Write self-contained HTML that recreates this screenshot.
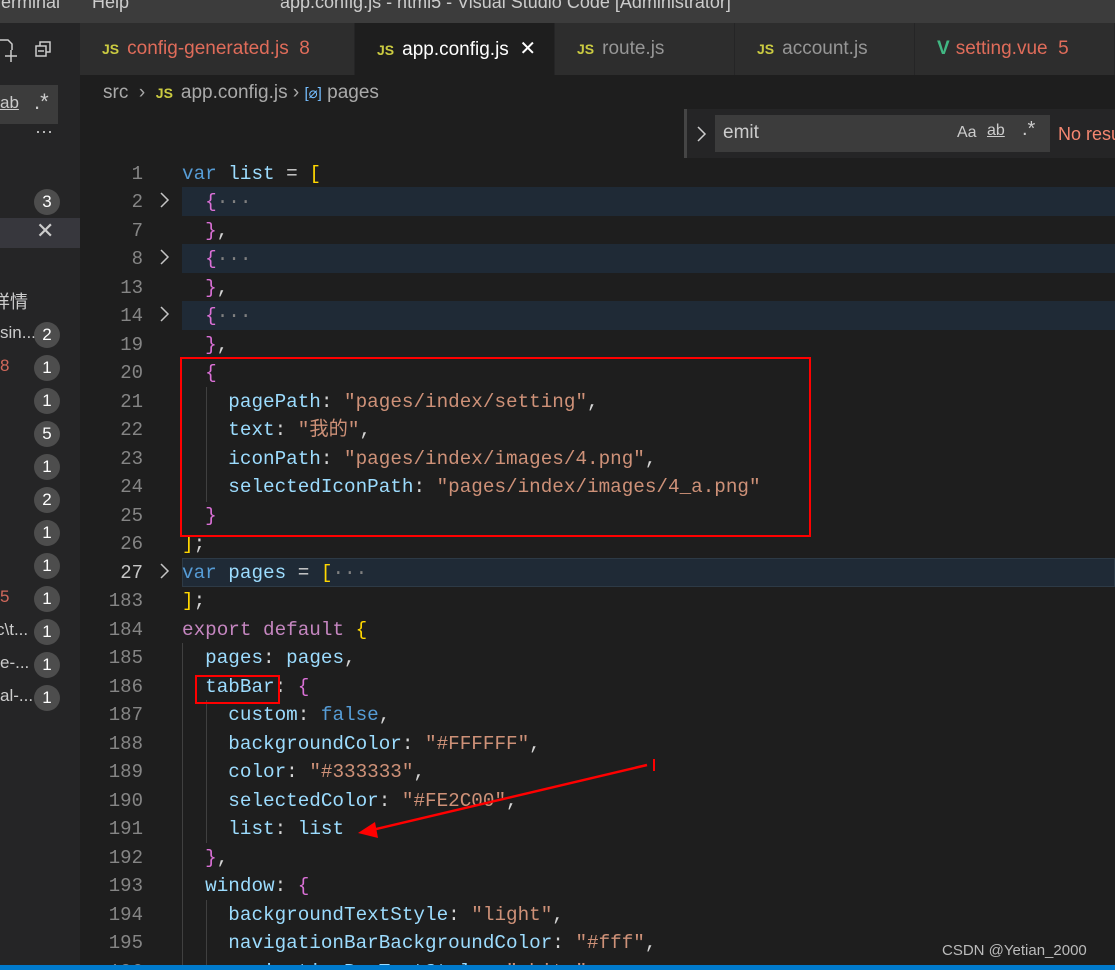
<!DOCTYPE html>
<html><head><meta charset="utf-8"><style>
*{margin:0;padding:0;box-sizing:border-box}
html,body{width:1115px;height:970px;overflow:hidden}
body{background:#1e1e1e;font-family:"Liberation Sans","Noto Sans CJK SC",sans-serif;position:relative;color:#d4d4d4}
.abs{position:absolute}
.title{left:0;top:0;width:1115px;height:23px;background:#3c3c3c;color:#ccc;font-size:18px;overflow:hidden}
.side{left:0;top:23px;width:80px;height:942px;background:#252526}
.tabs{left:80px;top:23px;width:1035px;height:52px;background:#252526}
.tab{position:absolute;top:0;height:52px;background:#2d2d2d;border-right:1px solid #252526;font-size:19px;line-height:52px;color:#969696;white-space:nowrap}
.js{color:#cbcb41;font-weight:bold;font-size:14px;margin-right:8px}
.code{font-family:"Liberation Mono","Noto Sans CJK SC",monospace;font-size:19.3px;white-space:pre;line-height:24px}
.ln{position:absolute;left:80px;width:63px;text-align:right;color:#858585;font-family:"Liberation Mono",monospace;font-size:19px;line-height:24px}
.l{position:absolute;left:182px;height:24px;overflow:visible}
.fold{position:absolute;left:182px;width:933px;height:29px;background:#1f2a36}
.k{color:#569cd6}.p{color:#9cdcfe}.s{color:#ce9178}.c{color:#c586c0}.b{color:#da70d6}.y{color:#ffd700}.g{color:#808080}
.badge{position:absolute;left:34px;width:26px;height:26px;border-radius:13px;background:#4d4d4d;color:#fff;font-size:17px;text-align:center;line-height:26px}
.st{position:absolute;color:#ccc;font-size:17px;white-space:nowrap}
.guide{position:absolute;width:1px;background:#404040}
</style></head><body>
<div class="abs title"><span class="abs" style="left:-8px;top:-8px">Terminal</span><span class="abs" style="left:92px;top:-8px">Help</span><span class="abs" style="left:280px;top:-8px">app.config.js - html5 - Visual Studio Code [Administrator]</span></div>
<div class="abs side">
 <svg class="abs" style="left:0;top:13px" width="80" height="30"><path d="M0 4h8l4 4v6" stroke="#ccc" fill="none" stroke-width="1.5"/><path d="M11 14v12M5 20h12" stroke="#ccc" stroke-width="1.5"/><rect x="36" y="10" width="10" height="10" stroke="#ccc" fill="none" stroke-width="1.5"/><path d="M40 10V6h10v10h-4M38 15h6" stroke="#ccc" fill="none" stroke-width="1.5"/></svg>
 <div class="abs" style="left:0;top:62px;width:58px;height:39px;background:#3c3c3c"></div>
 <div class="abs" style="left:0;top:70px;font-size:17px;color:#ccc;text-decoration:underline">ab</div>
 <div class="abs" style="left:34px;top:66px;font-size:22px;color:#ccc">.*</div>
 <div class="abs" style="left:35px;top:98px;font-size:18px;color:#ccc">&middot;&middot;&middot;</div>
 <div class="badge" style="top:166px">3</div>
 <div class="abs" style="left:0;top:195px;width:80px;height:30px;background:#37373d"></div>
 <div class="abs" style="left:36px;top:195px;color:#ccc;font-size:22px">&#x2715;</div>
 <div class="st" style="left:-8px;top:265px;font-size:18px">详情</div>
 <div class="st" style="left:0;top:300px">sin...</div><div class="badge" style="top:299px">2</div>
 <div class="st" style="left:0;top:333px;color:#d1685b">8</div><div class="badge" style="top:332px">1</div>
 <div class="badge" style="top:365px">1</div>
 <div class="badge" style="top:398px">5</div>
 <div class="badge" style="top:431px">1</div>
 <div class="badge" style="top:464px">2</div>
 <div class="badge" style="top:497px">1</div>
 <div class="badge" style="top:530px">1</div>
 <div class="st" style="left:0;top:564px;color:#d1685b">5</div><div class="badge" style="top:563px">1</div>
 <div class="st" style="left:-4px;top:597px">c\t...</div><div class="badge" style="top:596px">1</div>
 <div class="st" style="left:0;top:630px">e-...</div><div class="badge" style="top:629px">1</div>
 <div class="st" style="left:0;top:663px">al-...</div><div class="badge" style="top:662px">1</div>
</div>
<div class="abs tabs">
 <div class="tab" style="left:0;width:275px;padding-left:22px;color:#e06c5a"><span class="js">JS</span>config-generated.js&nbsp; 8</div>
 <div class="tab" style="left:275px;width:200px;padding-left:22px;background:#1e1e1e;color:#fff"><span class="js">JS</span>app.config.js&nbsp;&nbsp;<span style="font-size:20px">&#x2715;</span></div>
 <div class="tab" style="left:475px;width:180px;padding-left:22px"><span class="js">JS</span>route.js</div>
 <div class="tab" style="left:655px;width:180px;padding-left:22px"><span class="js">JS</span>account.js</div>
 <div class="tab" style="left:835px;width:200px;padding-left:22px;color:#e06c5a"><span style="color:#41b883;font-weight:bold;margin-right:6px">V</span>setting.vue&nbsp; 5</div>
</div>
<div class="abs" style="left:103px;top:82px;font-size:19px;color:#a9a9a9;white-space:nowrap">src&nbsp; &#x203A; &nbsp;<span class="js">JS</span>app.config.js &#x203A; <span style="color:#75beff;font-size:15px">[&#x2300;]</span> pages</div>
<div class="abs" style="left:684px;top:109px;width:431px;height:49px;background:#252526;border-left:3px solid #454545"></div>
<svg class="abs" style="left:696px;top:125px" width="12" height="18"><path d="M2 2l7 7-7 7" stroke="#ccc" fill="none" stroke-width="1.5"/></svg>
<div class="abs" style="left:715px;top:115px;width:335px;height:37px;background:#3c3c3c"></div>
<div class="abs" style="left:723px;top:122px;font-size:19px;color:#ccc">emit</div>
<div class="abs" style="left:957px;top:124px;font-size:16px;color:#ccc">Aa</div>
<div class="abs" style="left:987px;top:122px;font-size:16px;color:#ccc;text-decoration:underline">ab</div>
<div class="abs" style="left:1022px;top:118px;font-size:20px;color:#ccc">.*</div>
<div class="abs" style="left:1058px;top:124px;font-size:18px;color:#f48771;white-space:nowrap">No results</div>

<div class="fold" style="top:187px"></div><div class="fold" style="top:244px"></div><div class="fold" style="top:301px"></div><div class="fold" style="top:558px;background:#1f2a36;border:1px solid #2d3a46"></div>
<div class="guide" style="left:206px;top:387px;height:115px"></div>
<div class="guide" style="left:182px;top:643px;height:322px"></div>
<div class="guide" style="left:206px;top:700px;height:143px"></div>
<div class="guide" style="left:206px;top:900px;height:65px"></div>

<svg class="abs" style="left:158px;top:190px" width="14" height="400"><g stroke="#c5c5c5" fill="none" stroke-width="1.5"><path d="M3 3l7 7-7 7"/><path d="M3 60l7 7-7 7"/><path d="M3 117l7 7-7 7"/><path d="M3 374l7 7-7 7"/></g></svg>

<div class="code">
<div class="ln" style="top:162px">1</div><div class="l" style="top:162px"><span class="k">var</span> <span class="p">list</span> = <span class="y">[</span></div>
<div class="ln" style="top:190px">2</div><div class="l" style="top:190px">  <span class="b">{</span><span class="g">&middot;&middot;&middot;</span></div>
<div class="ln" style="top:219px">7</div><div class="l" style="top:219px">  <span class="b">}</span>,</div>
<div class="ln" style="top:247px">8</div><div class="l" style="top:247px">  <span class="b">{</span><span class="g">&middot;&middot;&middot;</span></div>
<div class="ln" style="top:276px">13</div><div class="l" style="top:276px">  <span class="b">}</span>,</div>
<div class="ln" style="top:304px">14</div><div class="l" style="top:304px">  <span class="b">{</span><span class="g">&middot;&middot;&middot;</span></div>
<div class="ln" style="top:333px">19</div><div class="l" style="top:333px">  <span class="b">}</span>,</div>
<div class="ln" style="top:361px">20</div><div class="l" style="top:361px">  <span class="b">{</span></div>
<div class="ln" style="top:390px">21</div><div class="l" style="top:390px">    <span class="p">pagePath</span>: <span class="s">"pages/index/setting"</span>,</div>
<div class="ln" style="top:418px">22</div><div class="l" style="top:418px">    <span class="p">text</span>: <span class="s">"我的"</span>,</div>
<div class="ln" style="top:447px">23</div><div class="l" style="top:447px">    <span class="p">iconPath</span>: <span class="s">"pages/index/images/4.png"</span>,</div>
<div class="ln" style="top:475px">24</div><div class="l" style="top:475px">    <span class="p">selectedIconPath</span>: <span class="s">"pages/index/images/4_a.png"</span></div>
<div class="ln" style="top:504px">25</div><div class="l" style="top:504px">  <span class="b">}</span></div>
<div class="ln" style="top:532px">26</div><div class="l" style="top:532px"><span class="y">]</span>;</div>
<div class="ln" style="top:561px;color:#c6c6c6">27</div><div class="l" style="top:561px"><span class="k">var</span> <span class="p">pages</span> = <span class="y">[</span><span class="g">&middot;&middot;&middot;</span></div>
<div class="ln" style="top:589px">183</div><div class="l" style="top:589px"><span class="y">]</span>;</div>
<div class="ln" style="top:618px">184</div><div class="l" style="top:618px"><span class="c">export</span> <span class="c">default</span> <span class="y">{</span></div>
<div class="ln" style="top:646px">185</div><div class="l" style="top:646px">  <span class="p">pages</span>: <span class="p">pages</span>,</div>
<div class="ln" style="top:675px">186</div><div class="l" style="top:675px">  <span class="p">tabBar</span>: <span class="b">{</span></div>
<div class="ln" style="top:703px">187</div><div class="l" style="top:703px">    <span class="p">custom</span>: <span class="k">false</span>,</div>
<div class="ln" style="top:732px">188</div><div class="l" style="top:732px">    <span class="p">backgroundColor</span>: <span class="s">"#FFFFFF"</span>,</div>
<div class="ln" style="top:760px">189</div><div class="l" style="top:760px">    <span class="p">color</span>: <span class="s">"#333333"</span>,</div>
<div class="ln" style="top:789px">190</div><div class="l" style="top:789px">    <span class="p">selectedColor</span>: <span class="s">"#FE2C00"</span>,</div>
<div class="ln" style="top:817px">191</div><div class="l" style="top:817px">    <span class="p">list</span>: <span class="p">list</span></div>
<div class="ln" style="top:846px">192</div><div class="l" style="top:846px">  <span class="b">}</span>,</div>
<div class="ln" style="top:874px">193</div><div class="l" style="top:874px">  <span class="p">window</span>: <span class="b">{</span></div>
<div class="ln" style="top:903px">194</div><div class="l" style="top:903px">    <span class="p">backgroundTextStyle</span>: <span class="s">"light"</span>,</div>
<div class="ln" style="top:931px">195</div><div class="l" style="top:931px">    <span class="p">navigationBarBackgroundColor</span>: <span class="s">"#fff"</span>,</div>
<div class="abs" style="left:80px;top:955px;width:1035px;height:10px;overflow:hidden"><div class="ln" style="left:0;top:5px">196</div><div class="l" style="left:102px;top:5px">    <span class="p">navigationBarTextStyle</span>: <span class="s">"white"</span></div></div>
</div>
<div class="abs" style="left:180px;top:357px;width:631px;height:180px;border:2px solid #f00"></div>
<div class="abs" style="left:195px;top:675px;width:85px;height:29px;border:2px solid #f00"></div>
<svg class="abs" style="left:0;top:0" width="1115" height="970"><line x1="647" y1="765" x2="372" y2="830" stroke="#f00" stroke-width="2.5"/><polygon points="358,833 375,822 378,838" fill="#f00"/><line x1="654" y1="759" x2="654" y2="771" stroke="#f00" stroke-width="2"/></svg>
<div class="abs" style="left:942px;top:942px;font-size:15px;color:#bbb">CSDN @Yetian_2000</div>
<div class="abs" style="left:0;top:965px;width:1115px;height:5px;background:#007acc"></div>
</body></html>
